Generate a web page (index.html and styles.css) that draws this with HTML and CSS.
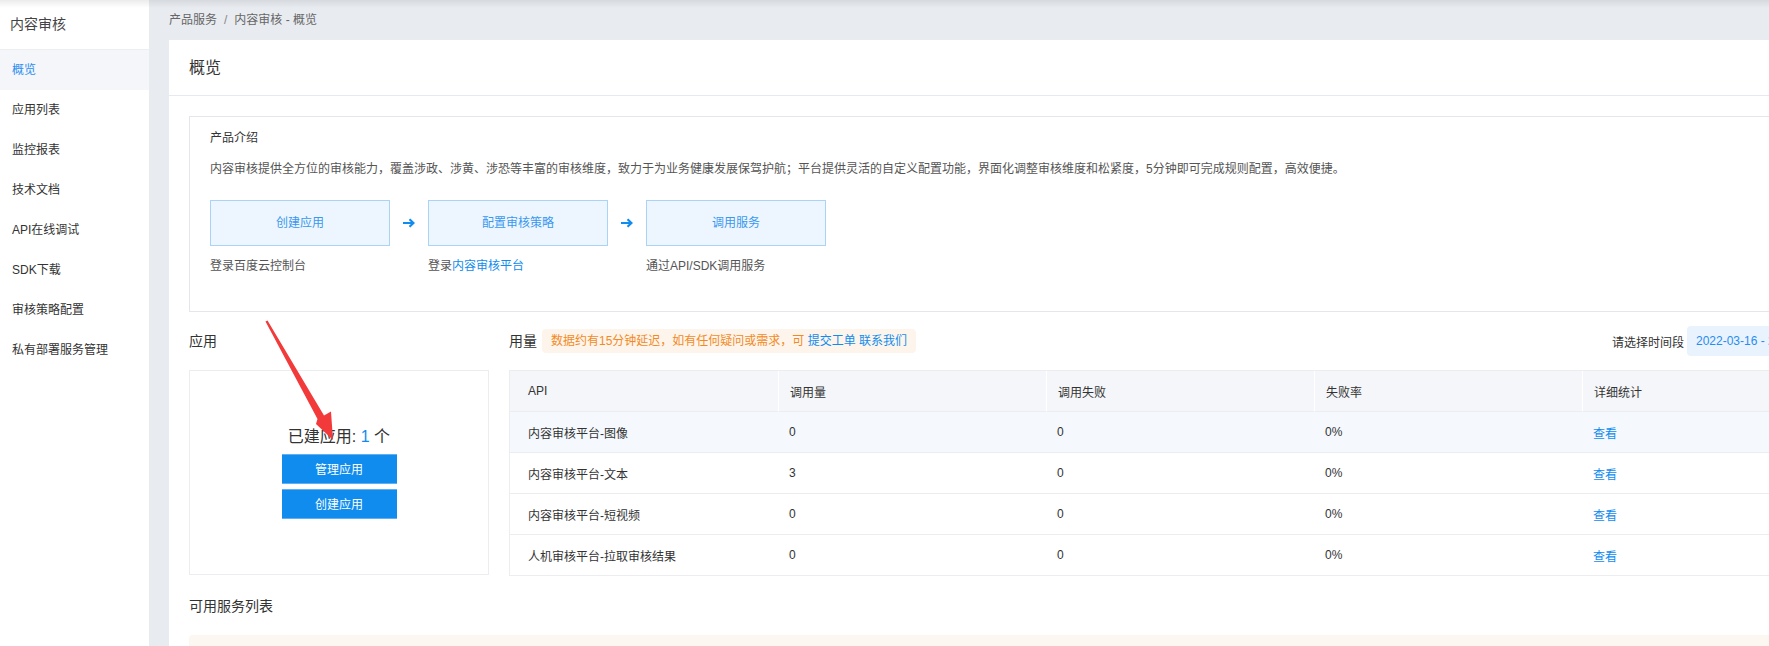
FILE: index.html
```html
<!DOCTYPE html>
<html lang="zh-CN">
<head>
<meta charset="utf-8">
<title>内容审核 - 概览</title>
<link rel="stylesheet" href="styles.css">
</head>
<body>
<div class="app">
  <aside class="sidebar">
    <div class="side-title">内容审核</div>
    <nav class="nav">
      <a class="nav-item active">概览</a>
      <a class="nav-item">应用列表</a>
      <a class="nav-item">监控报表</a>
      <a class="nav-item">技术文档</a>
      <a class="nav-item">API在线调试</a>
      <a class="nav-item">SDK下载</a>
      <a class="nav-item">审核策略配置</a>
      <a class="nav-item">私有部署服务管理</a>
    </nav>
  </aside>

  <main class="main">
    <div class="breadcrumb">产品服务<span class="crumb-sep">/</span>内容审核 - 概览</div>
    <section class="card">
      <div class="card-header">概览</div>
      <div class="card-body">
        <div class="intro">
          <div class="intro-title">产品介绍</div>
          <p class="intro-desc">内容审核提供全方位的审核能力，覆盖涉政、涉黄、涉恐等丰富的审核维度，致力于为业务健康发展保驾护航；平台提供灵活的自定义配置功能，界面化调整审核维度和松紧度，5分钟即可完成规则配置，高效便捷。</p>
          <div class="steps">
            <div class="step">
              <div class="step-box">创建应用</div>
              <div class="step-caption">登录百度云控制台</div>
            </div>
            <div class="step-arrow">
              <svg width="12" height="10" viewBox="0 0 12 10"><path d="M0 5H10.5M6.5 1.2L10.5 5L6.5 8.8" fill="none" stroke="#108cee" stroke-width="2.2"/></svg>
            </div>
            <div class="step">
              <div class="step-box">配置审核策略</div>
              <div class="step-caption">登录<a class="link">内容审核平台</a></div>
            </div>
            <div class="step-arrow">
              <svg width="12" height="10" viewBox="0 0 12 10"><path d="M0 5H10.5M6.5 1.2L10.5 5L6.5 8.8" fill="none" stroke="#108cee" stroke-width="2.2"/></svg>
            </div>
            <div class="step">
              <div class="step-box">调用服务</div>
              <div class="step-caption">通过API/SDK调用服务</div>
            </div>
          </div>
        </div>

        <div class="overview-row">
          <div class="apps-col">
            <div class="section-head"><h3 class="section-title">应用</h3></div>
            <div class="apps-box">
              <div class="apps-count">已建应用: <span class="num">1</span> 个</div>
              <button class="btn">管理应用</button>
              <button class="btn">创建应用</button>
            </div>
          </div>

          <div class="usage-col">
            <div class="section-head">
              <h3 class="section-title">用量</h3>
              <span class="notice">数据约有15分钟延迟，如有任何疑问或需求，可 <a class="link">提交工单</a> <a class="link">联系我们</a></span>
              <div class="range">
                <span class="range-label">请选择时间段</span>
                <span class="range-box">2022-03-16 - 2022-03-22</span>
              </div>
            </div>
            <table class="usage-table">
              <colgroup><col><col><col><col><col></colgroup>
              <thead>
                <tr><th>API</th><th>调用量</th><th>调用失败</th><th>失败率</th><th>详细统计</th></tr>
              </thead>
              <tbody>
                <tr class="hover"><td>内容审核平台-图像</td><td>0</td><td>0</td><td>0%</td><td><a class="link">查看</a></td></tr>
                <tr><td>内容审核平台-文本</td><td>3</td><td>0</td><td>0%</td><td><a class="link">查看</a></td></tr>
                <tr><td>内容审核平台-短视频</td><td>0</td><td>0</td><td>0%</td><td><a class="link">查看</a></td></tr>
                <tr><td>人机审核平台-拉取审核结果</td><td>0</td><td>0</td><td>0%</td><td><a class="link">查看</a></td></tr>
              </tbody>
            </table>
          </div>
        </div>

        <h3 class="services-title">可用服务列表</h3>
        <div class="services-box"></div>
      </div>
    </section>
  </main>

  <svg class="annotation" width="100" height="130" viewBox="0 0 100 130">
    <polygon points="10.5,6.5 12.5,5.5 69,100.5 76,96.5 78,125 61,109 62.5,104" fill="#f23a3a"/>
  </svg>
</div>
</body>
</html>
```

FILE: styles.css
```css
* { box-sizing: border-box; }

html, body {
  margin: 0;
  height: 646px;
  overflow: hidden;
}

body {
  font-family: "Liberation Sans", "Noto Sans CJK SC", sans-serif;
  font-size: 12px;
  color: #333;
  background: #e8ebf0;
}

.app {
  position: relative;
  display: flex;
  width: 1889px;
  height: 646px;
}

.app::before {
  content: "";
  position: absolute;
  left: 0;
  right: 0;
  top: 0;
  height: 8px;
  background: linear-gradient(rgba(0, 0, 0, 0.08), rgba(0, 0, 0, 0));
  z-index: 3;
  pointer-events: none;
}

/* Sidebar */
.sidebar {
  width: 149px;
  flex: none;
  background: #fff;
}

.side-title {
  height: 50px;
  line-height: 49px;
  padding-left: 10px;
  font-size: 14px;
  color: #444;
  border-bottom: 1px solid #eceef2;
}

.nav { display: flex; flex-direction: column; }

.nav-item {
  display: block;
  height: 40px;
  line-height: 40px;
  padding-left: 12px;
  color: #333;
  font-size: 12px;
}

.nav-item.active {
  background: #f5f6fa;
  color: #2b8ff0;
}

/* Main */
.main {
  width: 1740px;
  flex: none;
  padding: 0 20px;
}

.breadcrumb {
  height: 40px;
  line-height: 40px;
  color: #666;
  font-size: 12px;
}

.crumb-sep { margin: 0 7px; color: #888; }

.card {
  width: 1700px;
  height: 606px;
  background: #fff;
}

.card-header {
  height: 56px;
  line-height: 55px;
  padding-left: 20px;
  font-size: 16px;
  color: #333;
  border-bottom: 1px solid #e6e9ef;
}

.card-body { padding: 20px; }

.link { color: #108cee; text-decoration: none; }

/* Intro */
.intro {
  border: 1px solid #e3e6ec;
  padding: 11px 20px 35px;
}

.intro-title {
  line-height: 20px;
  font-size: 12px;
  color: #333;
}

.intro-desc {
  margin: 11px 0 0;
  line-height: 20px;
  color: #555;
}

.steps {
  display: flex;
  align-items: flex-start;
  margin-top: 21px;
}

.step { width: 180px; }

.step-box {
  height: 46px;
  line-height: 44px;
  text-align: center;
  background: #edf6fe;
  border: 1px solid #a9d4f8;
  color: #3a98ee;
}

.step-caption {
  margin-top: 10px;
  line-height: 20px;
  color: #555;
}

.step-arrow {
  width: 38px;
  height: 46px;
  display: flex;
  align-items: center;
  justify-content: center;
}

.step-arrow svg { display: block; }

/* Overview row */
.overview-row {
  display: flex;
  gap: 20px;
  margin-top: 17px;
}

.section-head {
  display: flex;
  align-items: center;
  height: 24px;
  margin-bottom: 17px;
}

.section-title {
  margin: 0;
  font-size: 14px;
  font-weight: normal;
  color: #333;
  line-height: 24px;
}

.apps-col { width: 300px; flex: none; }

.apps-box {
  height: 205px;
  border: 1px solid #ebedf1;
  display: flex;
  flex-direction: column;
  align-items: center;
  justify-content: center;
}

.apps-count {
  font-size: 16px;
  line-height: 20px;
  color: #333;
  margin-bottom: 7px;
}

.apps-count .num { color: #108cee; }

.btn {
  display: block;
  width: 115px;
  height: 30px;
  padding: 0;
  border: 0;
  border-top: 1px solid #5eb0f3;
  border-bottom: 1px solid #5eb0f3;
  background: #108cee;
  color: #fff;
  font-family: inherit;
  font-size: 12px;
}

.btn + .btn { margin-top: 5px; }

.usage-col { width: 1340px; flex: none; }

.notice {
  margin-left: 5px;
  height: 24px;
  line-height: 24px;
  padding: 0 9px;
  background: #fdf5ec;
  border-radius: 4px;
  color: #f38a1f;
}

.range {
  margin-left: auto;
  display: flex;
  align-items: center;
  gap: 3px;
}

.range-label { color: #333; }

.range-box {
  width: 162px;
  height: 30px;
  line-height: 30px;
  padding: 0 9px;
  border-radius: 4px;
  background: #e8f3fd;
  color: #2a8cee;
  white-space: nowrap;
}

.usage-table {
  width: 1340px;
  table-layout: fixed;
  border-collapse: separate;
  border-spacing: 0;
  border-top: 1px solid #ebedf1;
  border-left: 1px solid #ebedf1;
}

.usage-table col { width: 268px; }

.usage-table th,
.usage-table td {
  height: 41px;
  padding: 0 11px;
  text-align: left;
  font-weight: normal;
  font-size: 12px;
  color: #333;
  border-bottom: 1px solid #ebedf1;
  white-space: nowrap;
}

.usage-table th { background: #f5f6f9; }
.usage-table th + th { border-left: 1px solid #fff; }

.usage-table th:first-child,
.usage-table td:first-child { padding-left: 18px; }

.usage-table tr.hover td { background: #f5f9fd; }

.services-title {
  margin: 18px 0 17px;
  font-size: 14px;
  font-weight: normal;
  line-height: 24px;
  color: #333;
}

.services-box {
  height: 100px;
  border-radius: 4px;
  background: #fcf7f1;
}

/* Annotation arrow overlay */
.annotation {
  position: absolute;
  left: 255px;
  top: 315px;
  z-index: 4;
  pointer-events: none;
}
```
